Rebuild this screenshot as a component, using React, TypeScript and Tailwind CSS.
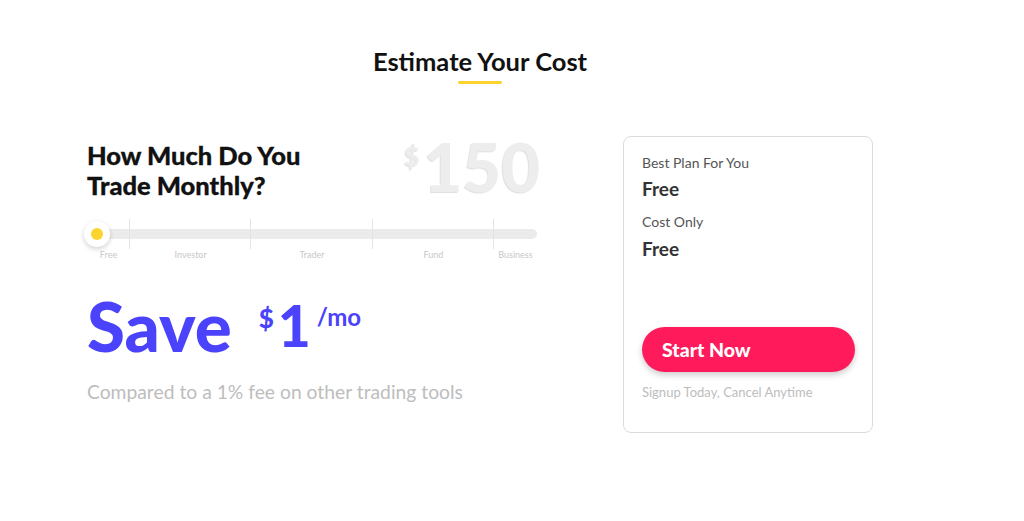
import type { JSX } from "react";

const tiers = ["Free", "Investor", "Trader", "Fund", "Business"];

function TradeSlider(): JSX.Element {
  return (
    <div className="relative mt-[14px] w-[450px]">
      <div className="relative h-[30px]">
        <div className="absolute left-0 right-0 top-[10px] h-[10px] rounded-full bg-[#ebebeb]" />
        {/* tick marks */}
        <div className="absolute inset-0 flex">
          <div className="w-[43px] border-r border-[#e4e4e4]" />
          <div className="flex-1 border-r border-[#e4e4e4]" />
          <div className="flex-1 border-r border-[#e4e4e4]" />
          <div className="flex-1 border-r border-[#e4e4e4]" />
          <div className="w-[43px]" />
        </div>
        <div className="absolute left-[-3px] top-[2px] flex h-[26px] w-[26px] items-center justify-center rounded-full bg-white shadow-[0_2px_5px_rgba(0,0,0,0.18)]">
          <div className="h-[12px] w-[12px] rounded-full bg-[#fdd32f]" />
        </div>
      </div>
      <div className="flex text-[9px] leading-[12px] text-[#c8c8c8]">
        {tiers.map((t, i) => (
          <div
            key={t}
            className={i === 0 || i === tiers.length - 1 ? "w-[43px] text-center" : "flex-1 text-center"}
          >
            {t}
          </div>
        ))}
      </div>
    </div>
  );
}

export default function App(): JSX.Element {
  return (
    <div className="h-[521px] w-full bg-white font-['Lato','Noto_Sans',sans-serif]">
      <div className="ml-[87px] flex w-[786px] flex-col items-center pt-[44px]">
        <h2 className="text-[25.5px] font-bold leading-[34px] text-[#111]">Estimate Your Cost</h2>
        <div className="mt-[3px] h-[3px] w-[44px] rounded-full bg-[#fdd32f]" />
      </div>

      <div className="ml-[87px] mt-[57px] flex w-[786px] items-start justify-between">
        <div className="w-[450px]">
          <div className="flex h-[64px] items-start justify-between">
            <h3 className="mt-[-1px] text-[25.5px] font-black leading-[30px] text-[#111] [-webkit-text-stroke:0.3px_#111]">
              How Much Do You
              <br />
              Trade Monthly?
            </h3>
            <div className="mr-[-3px] mt-[-8px] flex items-start text-[#ededed] [text-shadow:-1px_1px_1px_rgba(0,0,0,0.13)]">
              <span className="mt-[10px] text-[26px] font-black leading-[26px]">$</span>
              <span className="ml-[4px] text-[67px] font-black leading-[67px]">150</span>
            </div>
          </div>

          <TradeSlider />

          <div className="mt-[28px] flex items-start text-[#4b42fb]">
            <span className="text-[69px] font-black leading-[74px]">Save</span>
            <span className="ml-[27px] mt-[16px] text-[26px] font-black leading-[26px]">$</span>
            <span className="ml-[4px] mt-[8px] text-[57px] font-black leading-[57px]">1</span>
            <span className="ml-[6px] mt-[16px] text-[24px] font-bold leading-[24px]">/mo</span>
          </div>

          <p className="mt-[17px] text-[19.3px] leading-[24px] text-[#bdbdbd]">
            Compared to a 1% fee on other trading tools
          </p>
        </div>

        <div className="mt-[-5px] flex h-[297px] w-[250px] flex-col rounded-[8px] border border-[#dcdcdc] px-[18px] pt-[17px]">
          <div className="text-[14px] leading-[18px] text-[#555]">Best Plan For You</div>
          <div className="mt-[5px] text-[19px] font-bold leading-[24px] text-[#333]">Free</div>
          <div className="mt-[12px] text-[14px] leading-[18px] text-[#555]">Cost Only</div>
          <div className="mt-[6px] text-[19px] font-bold leading-[24px] text-[#333]">Free</div>
          <button
            type="button"
            className="mt-[66px] h-[45px] w-[213px] rounded-full bg-[#ff1a5b] pl-[20px] text-left text-[19.5px] font-black text-white shadow-[0_3px_6px_rgba(0,0,0,0.2)]"
          >
            Start Now
          </button>
          <div className="mt-[11px] text-[13px] leading-[18px] text-[#bdbdbd]">
            Signup Today, Cancel Anytime
          </div>
        </div>
      </div>
    </div>
  );
}
